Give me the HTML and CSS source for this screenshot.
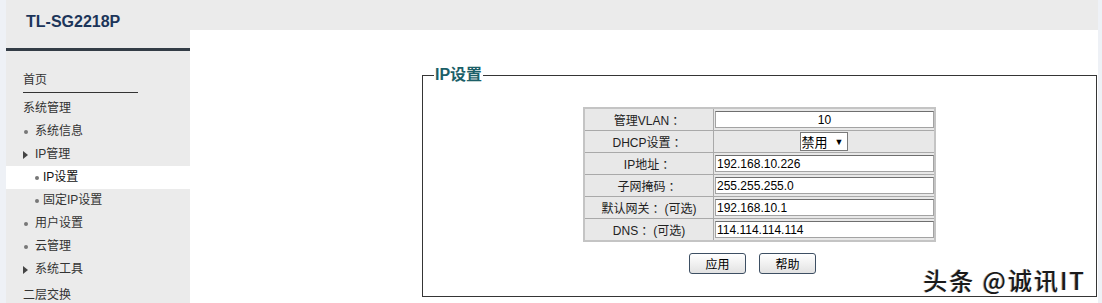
FILE: index.html
```html
<!DOCTYPE html>
<html lang="zh-CN">

<head>
    <meta charset="UTF-8">
    <title>IP设置</title>
    <link rel="stylesheet" href="styles.css">
</head>

<body>
    <div class="page">
        <div class="sidebar">
            <div class="brand">TL-SG2218P</div>
            <ul class="menu">
                <li class="home">首页</li>
                <li class="group">系统管理</li>
                <li class="item dot">系统信息</li>
                <li class="item arrow">IP管理</li>
                <li class="sub active">IP设置</li>
                <li class="sub">固定IP设置</li>
                <li class="item dot">用户设置</li>
                <li class="item dot">云管理</li>
                <li class="item arrow">系统工具</li>
                <li class="group last">二层交换</li>
            </ul>
        </div>
        <div class="main">
            <fieldset class="panel">
                <legend>IP设置</legend>
                <table class="form-table">
                    <tr>
                        <td class="label">管理VLAN<span class="colon">：</span></td>
                        <td><input class="field center" type="text" value="10"></td>
                    </tr>
                    <tr>
                        <td class="label">DHCP设置<span class="colon">：</span></td>
                        <td class="center-cell">
                            <span class="select-box"><select><option>禁用</option></select><span class="caret">▼</span></span>
                        </td>
                    </tr>
                    <tr>
                        <td class="label">IP地址<span class="colon">：</span></td>
                        <td><input class="field" type="text" value="192.168.10.226"></td>
                    </tr>
                    <tr>
                        <td class="label">子网掩码<span class="colon">：</span></td>
                        <td><input class="field" type="text" value="255.255.255.0"></td>
                    </tr>
                    <tr>
                        <td class="label">默认网关<span class="colon">：</span>(可选)</td>
                        <td><input class="field" type="text" value="192.168.10.1"></td>
                    </tr>
                    <tr>
                        <td class="label">DNS<span class="colon">：</span>(可选)</td>
                        <td><input class="field" type="text" value="114.114.114.114"></td>
                    </tr>
                </table>
                <div class="actions">
                    <button>应用</button>
                    <button>帮助</button>
                </div>
            </fieldset>
        </div>
        <div class="watermark">头条 @诚讯IT</div>
    </div>
</body>

</html>
```

FILE: styles.css
```css
/* 全局 */
body {
    margin: 0;
    padding: 0 4px 0 6px;
    height: 303px;
    background: #eef1f6;
    font-family: "Liberation Sans", "Noto Sans CJK SC", sans-serif;
    font-size: 12px;
    color: #333333;
    overflow: hidden;
}

.page {
    position: relative;
    height: 100%;
    display: grid;
    grid-template-columns: 184px 1fr;
    grid-template-rows: 30px 1fr;
    background-color: #ebebeb;
}

/* 左侧菜单 */
.sidebar {
    grid-row: 1 / 3;
    grid-column: 1;
}

.brand {
    height: 51px;
    box-sizing: border-box;
    padding: 14px 0 0 20px;
    font-size: 16px;
    line-height: 16px;
    font-weight: bold;
    color: #1c355a;
    border-bottom: 3px solid #333c46;
}

.menu {
    list-style: none;
    margin: 0;
    padding: 18px 0 0;
}

.menu li {
    height: 23px;
    line-height: 23px;
    white-space: nowrap;
}

.menu .home {
    margin-left: 17px;
    width: 115px;
    border-bottom: 1px solid #333333;
}

.menu .group {
    margin-top: 4px;
    padding-left: 17px;
}

.menu .group.last {
    margin-top: 3px;
}

.menu .item {
    padding-left: 29px;
    position: relative;
}

.menu .sub {
    padding-left: 37px;
    position: relative;
}

.menu .item.dot::before,
.menu .sub::before {
    content: "";
    position: absolute;
    top: 10px;
    width: 4px;
    height: 4px;
    border-radius: 50%;
    background: #777777;
}

.menu .item.dot::before {
    left: 18px;
}

.menu .sub::before {
    left: 29px;
}

.menu .item.arrow::before {
    content: "";
    position: absolute;
    left: 17px;
    top: 8px;
    border-left: 5px solid #444444;
    border-top: 4px solid transparent;
    border-bottom: 4px solid transparent;
}

.menu .active {
    background: #ffffff;
    color: #111111;
}

/* 内容区 */
.main {
    grid-row: 2;
    grid-column: 2;
    background: #ffffff;
}

.panel {
    margin: 35px 1px 0 232px;
    padding: 22px 0 22px;
    border: 1px solid #353535;
    min-width: 0;
}

.panel legend {
    margin-left: 11px;
    padding: 0 1px;
    font-size: 16px;
    line-height: 20px;
    font-weight: bold;
    color: #1c5f68;
}

.form-table {
    margin: 0 auto;
    width: 353px;
    border-collapse: collapse;
    border: 2px solid #c4c4c4;
    background: #e8e8e8;
}

.form-table td {
    height: 21px;
    padding: 0;
    border: 1px solid #a9a9a9;
}

.form-table .label {
    width: 129px;
    text-align: center;
    color: #222222;
}

.colon {
    padding-left: 3px;
}

.field {
    display: block;
    box-sizing: border-box;
    width: 219px;
    height: 17px;
    margin-left: 1px;
    padding: 0 1px;
    border: 1px solid #a3a3a3;
    border-top-color: #6f6f6f;
    font-family: "Liberation Sans", "Noto Sans CJK SC", sans-serif;
    font-size: 12px;
    color: #000000;
    background: #ffffff;
}

.field.center {
    text-align: center;
}

.center-cell {
    text-align: center;
}

.select-box {
    display: inline-flex;
    align-items: center;
    height: 17px;
    padding: 0 4px 0 1px;
    border: 1px solid #7a7a7a;
    background: #ffffff;
    vertical-align: middle;
}

.select-box select {
    appearance: none;
    -webkit-appearance: none;
    border: none;
    background: transparent;
    padding: 0;
    font-family: "Noto Sans CJK SC", sans-serif;
    font-size: 13px;
    color: #000000;
    outline: none;
}

.caret {
    margin-left: 6px;
    font-size: 9px;
    color: #000000;
}

/* 按钮 */
.actions {
    display: flex;
    justify-content: center;
    gap: 13px;
    margin-top: 11px;
    padding-right: 14px;
}

.actions button {
    width: 57px;
    height: 21px;
    padding: 0;
    border: 1px solid #3d4f63;
    border-radius: 3px;
    background: linear-gradient(#ffffff, #e2e2e2);
    font-family: "Noto Sans CJK SC", sans-serif;
    font-size: 12px;
    color: #000000;
}

/* 水印 */
.watermark {
    position: absolute;
    right: 12px;
    bottom: 6px;
    font-family: "Noto Sans CJK SC", sans-serif;
    font-size: 24px;
    font-weight: 500;
    letter-spacing: 2px;
    color: #1a1a1a;
    text-shadow: 1px 1px 0 #ffffff, -1px 0 0 #bbbbbb;
}
```
